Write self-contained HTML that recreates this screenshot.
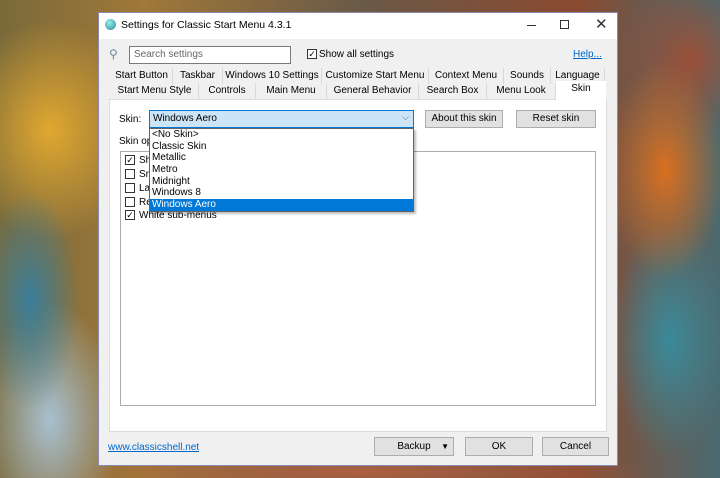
<!DOCTYPE html>
<html><head><meta charset="utf-8"><style>
*{box-sizing:border-box;margin:0;padding:0}
body{width:720px;height:478px;overflow:hidden;position:relative;font-family:"Liberation Sans",sans-serif;font-size:10px;color:#000;
background:
radial-gradient(ellipse 50px 110px at 30px 300px,#3a7e9a 0%,transparent 100%),
radial-gradient(ellipse 90px 110px at 50px 130px,#e0a830 0%,transparent 100%),
radial-gradient(ellipse 70px 120px at 50px 420px,#a8c0d0 0%,transparent 100%),
radial-gradient(ellipse 60px 110px at 665px 170px,#d87020 0%,transparent 100%),
radial-gradient(ellipse 60px 120px at 670px 340px,#3a8a9a 0%,transparent 100%),
radial-gradient(ellipse 70px 80px at 690px 60px,#9a5038 0%,transparent 100%),
radial-gradient(ellipse 300px 20px at 360px 472px,#b06040 0%,transparent 100%),
linear-gradient(90deg,#7a6a3a,#a07838 20%,#6a5a48 50%,#8a4a30 80%,#4a6a70);}
.a{position:absolute}
.win{left:98px;top:12px;width:520px;height:454px;background:#f0f0f0;border:1px solid #8a8ab0}
.tb{left:0;top:0;width:518px;height:26px;background:#fff}
.btn{position:absolute;background:#e1e1e1;border:1px solid #adadad;text-align:center;line-height:16px;font-size:10px}
.tab{position:absolute;height:16px;line-height:15px;text-align:center;border-right:1px solid #d8d8d8;font-size:10px}
.cb{position:absolute;width:10px;height:10px;border:1px solid #333;background:#fff;font-size:9px;line-height:8px;text-align:center}
.it{height:11.7px;line-height:11.7px;padding-left:2px}
</style></head><body>
<div class="a win">
 <div class="a tb">
  <div class="a" style="left:6px;top:6px;width:11px;height:11px;border-radius:50%;background:radial-gradient(circle at 40% 35%,#9ee,#2a8a9a)"></div>
  <div class="a" style="left:22px;top:6px;font-size:10.5px">Settings for Classic Start Menu 4.3.1</div>
  <div class="a" style="left:428px;top:12px;width:9px;height:1px;background:#333"></div>
  <div class="a" style="left:461px;top:7px;width:9px;height:9px;border:1px solid #333"></div>
  <div class="a" style="left:496px;top:2px;font-size:15px;color:#333">✕</div>
 </div>
 <div class="a" style="left:10px;top:34px;font-size:12px;color:#6a8aaa">⚲</div>
 <div class="a" style="left:30px;top:33px;width:162px;height:18px;background:#fff;border:1px solid #7a7a7a;color:#666;padding:2px 4px">Search settings</div>
 <div class="cb" style="left:208px;top:36px">✓</div>
 <div class="a" style="left:220px;top:36px">Show all settings</div>
 <div class="a" style="left:474px;top:36px;color:#0066cc;text-decoration:underline">Help...</div>
 <div class="a" style="left:12px;top:55px;width:494px;height:16px">
  <div class="tab" style="left:0;width:62px">Start Button</div>
  <div class="tab" style="left:62px;width:50px">Taskbar</div>
  <div class="tab" style="left:112px;width:99px">Windows 10 Settings</div>
  <div class="tab" style="left:211px;width:107px">Customize Start Menu</div>
  <div class="tab" style="left:318px;width:75px">Context Menu</div>
  <div class="tab" style="left:393px;width:47px">Sounds</div>
  <div class="tab" style="left:440px;width:54px">Language</div>
 </div>
 <div class="a" style="left:12px;top:70px;width:494px;height:16px">
  <div class="tab" style="left:0;width:88px">Start Menu Style</div>
  <div class="tab" style="left:88px;width:57px">Controls</div>
  <div class="tab" style="left:145px;width:71px">Main Menu</div>
  <div class="tab" style="left:216px;width:92px">General Behavior</div>
  <div class="tab" style="left:308px;width:68px">Search Box</div>
  <div class="tab" style="left:376px;width:69px">Menu Look</div>
 </div>
 <div class="a" style="left:10px;top:86px;width:498px;height:333px;background:#fff;border:1px solid #dcdcdc"></div>
 <div class="a" style="left:457px;top:68px;width:50px;height:20px;background:#fff;text-align:center;line-height:16px">Skin</div>
 <div class="a" style="left:20px;top:101px">Skin:</div>
 <div class="a" style="left:50px;top:97px;width:265px;height:18px;background:#cce4f7;border:1px solid #0078d7;padding:2px 3px">Windows Aero<span style="position:absolute;right:4px;top:1px;color:#555;font-size:9px">⌵</span></div>
 <div class="btn" style="left:326px;top:97px;width:78px;height:18px">About this skin</div>
 <div class="btn" style="left:417px;top:97px;width:80px;height:18px">Reset skin</div>
 <div class="a" style="left:20px;top:123px">Skin op</div>
 <div class="a" style="left:21px;top:138px;width:476px;height:255px;background:#fff;border:1px solid #acacac">
  <div class="cb" style="left:4px;top:3px">✓</div><div class="a" style="left:18px;top:3px">Sh</div>
  <div class="cb" style="left:4px;top:17px"></div><div class="a" style="left:18px;top:17px">Sr</div>
  <div class="cb" style="left:4px;top:31px"></div><div class="a" style="left:18px;top:31px">La</div>
  <div class="cb" style="left:4px;top:45px"></div><div class="a" style="left:18px;top:45px">Re</div>
  <div class="cb" style="left:4px;top:58px">✓</div><div class="a" style="left:18px;top:58px">White sub-menus</div>
 </div>
 <div class="a" style="left:50px;top:115px;width:265px;height:84px;background:#fff;border:1px solid #646464;box-shadow:2px 2px 2px rgba(0,0,0,.25)">
  <div class="it">&lt;No Skin&gt;</div><div class="it">Classic Skin</div><div class="it">Metallic</div><div class="it">Metro</div><div class="it">Midnight</div><div class="it">Windows 8</div>
  <div class="it" style="background:#0078d7;color:#fff">Windows Aero</div>
 </div>
 <div class="a" style="left:9px;top:429px;color:#0066cc;text-decoration:underline">www.classicshell.net</div>
 <div class="btn" style="left:275px;top:424px;width:80px;height:19px;line-height:17px">Backup<span style="position:absolute;right:4px;font-size:8px">▼</span></div>
 <div class="btn" style="left:366px;top:424px;width:68px;height:19px;line-height:17px">OK</div>
 <div class="btn" style="left:443px;top:424px;width:67px;height:19px;line-height:17px">Cancel</div>
</div>
</body></html>
